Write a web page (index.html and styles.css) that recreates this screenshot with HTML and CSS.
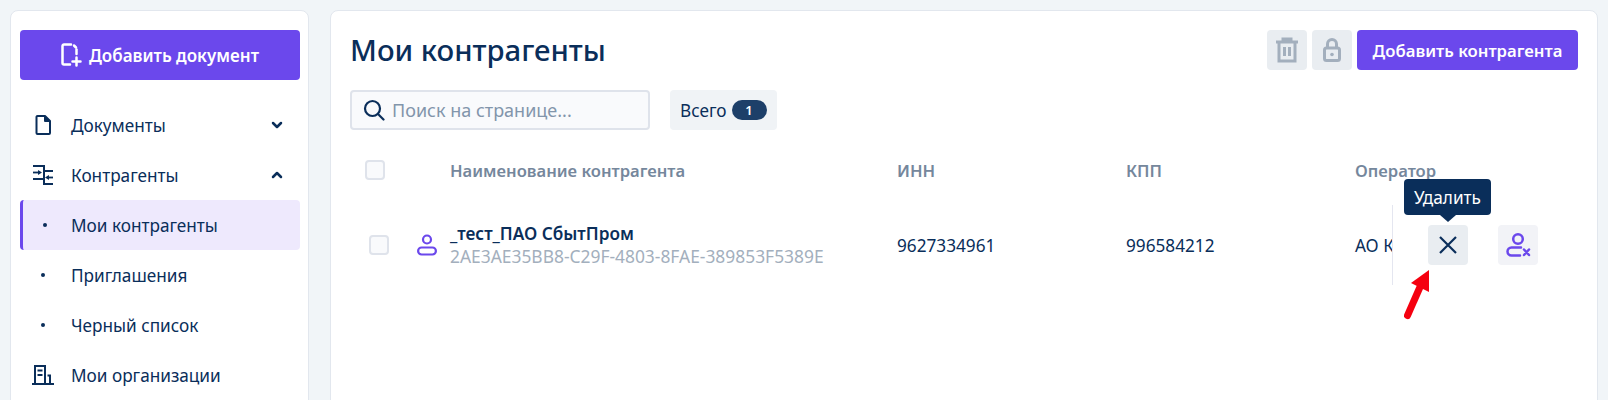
FILE: index.html
```html
<!DOCTYPE html>
<html lang="ru">
<head>
    <meta charset="UTF-8">
    <title>Мои контрагенты</title>
    <link rel="stylesheet" href="styles.css">
</head>
<body>
    <aside class="sidebar">
        <button class="add-doc">
            <svg width="22" height="24" viewBox="0 0 22 24" fill="none" stroke="#fff" stroke-width="2.500" stroke-linecap="round" stroke-linejoin="round">
                <path d="M9 21.500H3a1.500 1.500 0 0 1-1.500-1.500V3A1.500 1.500 0 0 1 3 1.500h7"/>
                <path d="M15.500 6.500V11"/>
                <path d="M13 2.500l2 2"/>
                <path d="M15.500 14.500v8M11.500 18.500h8"/>
            </svg>
            Добавить документ
        </button>
        <nav class="menu">
            <div class="menu-item">
                <span class="menu-icon">
                    <svg width="16" height="20" viewBox="0 0 16 20" fill="none" stroke="#0a2e5a" stroke-width="2" stroke-linejoin="round">
                        <path d="M1.500 2a1 1 0 0 1 1-1h7.500l5 5v12a1 1 0 0 1-1 1H2.500a1 1 0 0 1-1-1z"/>
                        <path d="M10 1v5h5" fill="#0a2e5a"/>
                    </svg>
                </span>
                <span class="menu-label">Документы</span>
                <svg class="chevron" width="12" height="8" viewBox="0 0 12 8" fill="none" stroke="#0a2e5a" stroke-width="2.500" stroke-linecap="round" stroke-linejoin="round"><path d="M2 2l4 4 4-4"/></svg>
            </div>
            <div class="menu-item">
                <span class="menu-icon">
                    <svg width="20" height="20" viewBox="0 0 20 20" fill="none" stroke="#0a2e5a" stroke-width="2">
                        <path d="M0 1h11v5h9M0 14h11v5h9M11 6v8"/>
                        <path d="M0 7.500h7" stroke-width="1.800"/>
                        <path d="M5 5l4 2.500L5 10z" fill="#0a2e5a" stroke="none"/>
                        <path d="M20 12.500h-6" stroke-width="1.800"/>
                        <path d="M16 10l-4 2.500 4 2.500z" fill="#0a2e5a" stroke="none"/>
                    </svg>
                </span>
                <span class="menu-label">Контрагенты</span>
                <svg class="chevron" width="12" height="8" viewBox="0 0 12 8" fill="none" stroke="#0a2e5a" stroke-width="2.500" stroke-linecap="round" stroke-linejoin="round"><path d="M2 6l4-4 4 4"/></svg>
            </div>
            <div class="menu-item active">
                <span class="menu-icon"><i class="dot"></i></span>
                <span class="menu-label">Мои контрагенты</span>
            </div>
            <div class="menu-item">
                <span class="menu-icon"><i class="dot"></i></span>
                <span class="menu-label">Приглашения</span>
            </div>
            <div class="menu-item">
                <span class="menu-icon"><i class="dot"></i></span>
                <span class="menu-label">Черный список</span>
            </div>
            <div class="menu-item">
                <span class="menu-icon">
                    <svg width="22" height="20" viewBox="0 0 22 20" fill="none" stroke="#0a2e5a" stroke-width="2">
                        <path d="M0 19h22M3 19V1h10v18"/>
                        <path d="M5.500 5.500h5M5.500 10h5"/>
                        <path d="M15.500 10.500H18v8.500"/>
                    </svg>
                </span>
                <span class="menu-label">Мои организации</span>
            </div>
        </nav>
    </aside>

    <main class="content">
        <div class="page-head">
            <h1>Мои контрагенты</h1>
            <div class="head-actions">
                <button class="icon-btn">
                    <svg width="24" height="26" viewBox="0 0 24 26" fill="none" stroke="#a3afbd" stroke-width="3">
                        <path d="M1 5h22M8 5V2h8v3M4 5v19h16V5M9.500 10v9M14.500 10v9"/>
                    </svg>
                </button>
                <button class="icon-btn">
                    <svg width="20" height="26" viewBox="0 0 20 26" fill="none" stroke="#a3afbd" stroke-width="3">
                        <rect x="2.500" y="11" width="15" height="12.500" rx="2"/>
                        <path d="M5.500 11V7a4.500 4.500 0 0 1 9 0v4"/>
                        <circle cx="10" cy="17.500" r="1.800" fill="#a3afbd" stroke="none"/>
                    </svg>
                </button>
                <button class="add-btn">Добавить контрагента</button>
            </div>
        </div>

        <div class="filters">
            <div class="search">
                <svg width="22" height="22" viewBox="0 0 22 22" fill="none" stroke="#0a2e5a" stroke-width="2.200" stroke-linecap="round">
                    <circle cx="9.500" cy="9.500" r="7.500"/>
                    <path d="M15.500 15.500l5 5"/>
                </svg>
                <span>Поиск на странице...</span>
            </div>
            <div class="total">Всего <span class="badge">1</span></div>
        </div>

        <div class="table">
            <div class="table-head">
                <span class="check"></span>
                <span>Наименование контрагента</span>
                <span>ИНН</span>
                <span>КПП</span>
                <span>Оператор</span>
            </div>
            <div class="table-row">
                <span class="check check-row"></span>
                <div class="name-cell">
                    <svg class="person" width="20" height="22" viewBox="0 0 20 22" fill="none" stroke="#6b48ec" stroke-width="2.200">
                        <circle cx="10" cy="5.500" r="4"/>
                        <rect x="1.100" y="13.500" width="17.800" height="7" rx="3.500"/>
                    </svg>
                    <div>
                        <div class="org-name">_тест_ПАО СбытПром</div>
                        <div class="org-id">2AE3AE35BB8-C29F-4803-8FAE-389853F5389E</div>
                    </div>
                </div>
                <span>9627334961</span>
                <span>996584212</span>
                <span class="operator">АО К</span>
                <div class="row-actions">
                    <button class="icon-btn delete-btn">
                        <svg width="20" height="20" viewBox="0 0 20 20" fill="none" stroke="#0a2e5a" stroke-width="2.200"><path d="M2 2l16 16M18 2L2 18"/></svg>
                        <span class="tooltip">Удалить</span>
                    </button>
                    <button class="icon-btn block-btn">
                        <svg width="28" height="28" viewBox="0 0 28 28" fill="none" stroke="#6b48ec" stroke-width="2.500" stroke-linecap="round">
                            <circle cx="14" cy="8" r="4.800"/>
                            <path d="M17 16.500H7.500a4 4 0 0 0 0 8H16"/>
                            <path d="M20 18.500l5 5.500M25 18.500l-5 5.500"/>
                        </svg>
                    </button>
                </div>
            </div>
        </div>

        <svg class="red-arrow" width="30" height="52" viewBox="0 0 30 52" fill="none">
            <path d="M3.500 47.500L16 19" stroke="#f5000f" stroke-width="7" stroke-linecap="round"/>
            <path d="M25 2V24L7 15z" fill="#f5000f"/>
        </svg>
    </main>
</body>
</html>
```

FILE: styles.css
```css
* {
    box-sizing: border-box;
}

body {
    margin: 0;
    height: 400px;
    overflow: hidden;
    padding: 10px 10px 0;
    display: flex;
    gap: 21px;
    background: #f1f5f8;
    font-family: "Noto Sans", Arial, sans-serif;
    font-size: 17.200px;
    color: #0a2e5a;
}

button {
    font-family: inherit;
    border: none;
    cursor: pointer;
}

.sidebar {
    flex: 0 0 298px;
    height: 420px;
    padding: 19px 8px 0 10px;
    background: #fff;
    border: 1px solid #e2e7ee;
    border-radius: 8px;
}

.add-doc {
    width: 280px;
    height: 50px;
    margin-left: -1px;
    display: flex;
    align-items: center;
    justify-content: center;
    gap: 6px;
    background: #6b48ec;
    color: #fff;
    font-size: 17px;
    font-weight: 600;
    border-radius: 4px;
}

.menu {
    margin: 20px 0 0 -1px;
    width: 280px;
}

.menu-item {
    height: 50px;
    display: flex;
    align-items: center;
    border-radius: 4px;
}

.menu-icon {
    width: 51px;
    display: flex;
    justify-content: center;
    padding-right: 5px;
}

.menu-label {
    flex: 1;
}

.chevron {
    margin-right: 17px;
}

.dot {
    width: 4px;
    height: 4px;
    border-radius: 50%;
    background: #0a2e5a;
}

.active {
    background: #eee9fd;
    border-left: 3px solid #6b48ec;
}

.active .menu-icon {
    width: 48px;
}

.content {
    position: relative;
    flex: 1;
    height: 420px;
    padding: 19px 19px 0 19px;
    background: #fff;
    border: 1px solid #e2e7ee;
    border-radius: 8px;
}

.page-head {
    display: flex;
    justify-content: space-between;
    align-items: center;
    height: 40px;
}

h1 {
    margin: 0;
    font-size: 29.300px;
    font-weight: 500;
}

.head-actions {
    display: flex;
    gap: 5px;
}

.icon-btn {
    width: 40px;
    height: 40px;
    padding: 0;
    display: flex;
    align-items: center;
    justify-content: center;
    background: #e9edf1;
    border-radius: 4px;
}

.add-btn {
    width: 221px;
    height: 40px;
    background: #6b48ec;
    color: #fff;
    font-size: 16.700px;
    font-weight: 600;
    border-radius: 4px;
}

.filters {
    display: flex;
    gap: 20px;
    margin-top: 20px;
}

.search {
    width: 300px;
    height: 40px;
    display: flex;
    align-items: center;
    gap: 7px;
    padding-left: 11px;
    background: #f9fafc;
    border: 2px solid #dfe3eb;
    border-radius: 4px;
    color: #8295ab;
    font-size: 18px;
}

.total {
    height: 40px;
    padding: 0 10px;
    display: flex;
    align-items: center;
    gap: 5px;
    background: #f0f3f6;
    border-radius: 4px;
}

.badge {
    width: 35px;
    height: 20px;
    display: flex;
    align-items: center;
    justify-content: center;
    background: #1d3f69;
    color: #fff;
    font-size: 13px;
    font-weight: 600;
    border-radius: 10px;
}

.table-head,
.table-row {
    display: grid;
    grid-template-columns: 85px 447px 229px 229px auto;
    align-items: center;
    padding-left: 15px;
}

.table-head {
    height: 40px;
    margin-top: 20px;
    font-weight: 600;
    font-size: 16.600px;
    color: #75879c;
}

.table-row {
    position: relative;
    height: 80px;
    margin-top: 15px;
}

.check {
    width: 20px;
    height: 20px;
    background: #f9fafc;
    border: 2px solid #dfe3eb;
    border-radius: 4px;
}

.check-row {
    margin-left: 4px;
}

.name-cell {
    position: relative;
    display: flex;
    align-items: center;
}

.person {
    position: absolute;
    left: -33px;
}

.org-name {
    font-weight: 600;
    line-height: 23px;
    color: #0a2e5a;
}

.org-id {
    font-size: 17.400px;
    line-height: 23px;
    color: #a3afbd;
    white-space: nowrap;
}

.operator {
    white-space: nowrap;
}

/* колонка действий лежит поверх таблицы */
.row-actions {
    position: absolute;
    top: 0;
    left: 1042px;
    height: 80px;
    display: flex;
    align-items: center;
    gap: 30px;
    padding-left: 35px;
    background: #fff;
    border-left: 1px solid #e4e6f0;
}

.delete-btn {
    position: relative;
}

.block-btn {
    background: #f2f3f7;
}

.tooltip {
    position: absolute;
    left: -24px;
    bottom: 50px;
    width: 87px;
    height: 36px;
    display: flex;
    align-items: center;
    justify-content: center;
    background: #0a2e5a;
    color: #fff;
    font-size: 17.200px;
    border-radius: 4px;
}

.tooltip::after {
    content: "";
    position: absolute;
    left: 36px;
    bottom: -7px;
    border-left: 8px solid transparent;
    border-right: 8px solid transparent;
    border-top: 7px solid #0a2e5a;
}

.red-arrow {
    position: absolute;
    left: 1073px;
    top: 257px;
}
```
